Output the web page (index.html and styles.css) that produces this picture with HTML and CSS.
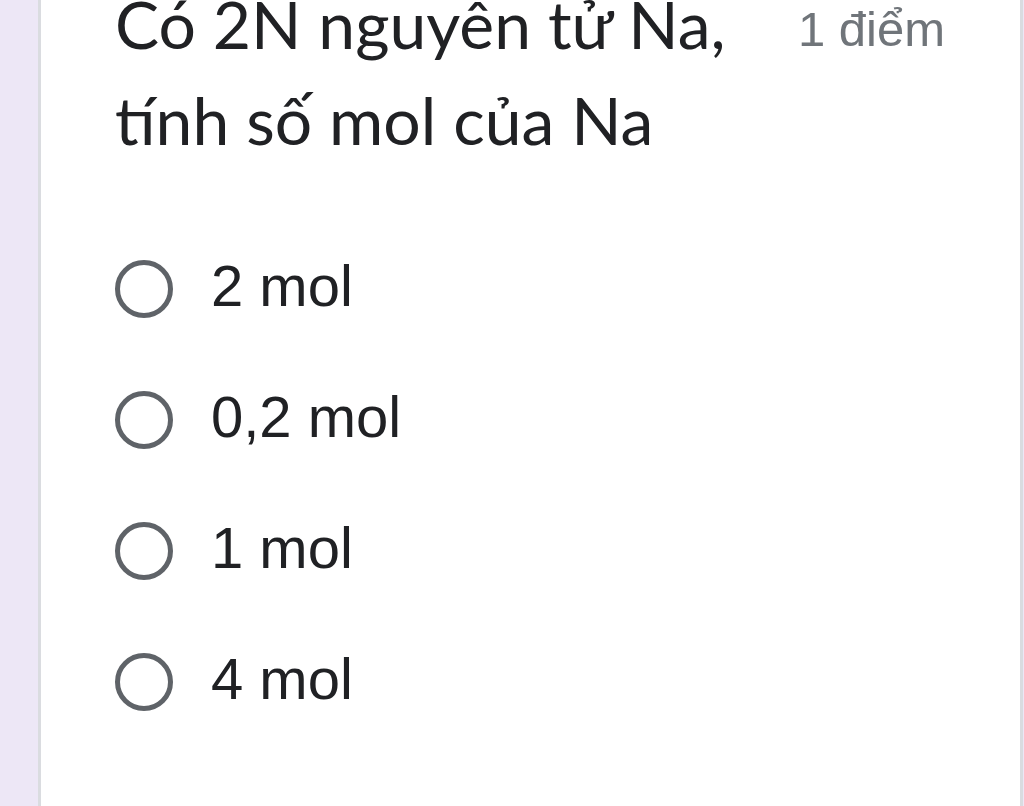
FILE: index.html
```html
<!DOCTYPE html>
<html lang="vi">
<head>
<meta charset="utf-8">
<title>Câu hỏi</title>
<link rel="stylesheet" href="styles.css">
</head>
<body>
<div class="page">
  <div class="side"></div>
  <div class="card">
    <div class="header">
      <div class="title">Có 2N nguyên tử Na, tính số mol của Na</div>
      <div class="points">1 điểm</div>
    </div>
    <div class="options">
      <div class="option"><span class="radio"></span><span class="label">2 mol</span></div>
      <div class="option"><span class="radio"></span><span class="label">0,2 mol</span></div>
      <div class="option"><span class="radio"></span><span class="label">1 mol</span></div>
      <div class="option"><span class="radio"></span><span class="label">4 mol</span></div>
    </div>
  </div>
</div>
</body>
</html>
```

FILE: styles.css
```css
html, body {
  margin: 0;
  padding: 0;
  height: 100%;
  overflow: hidden;
}
.page {
  display: flex;
  height: 806px;
  background: #ede7f6;
}
.side {
  width: 38px;
  flex: none;
}
.card {
  flex: 1;
  background: #ffffff;
  border-left: 3px solid #dadce0;
  border-right: 3px solid #dadce0;
  margin-right: 1px;
  padding: 0 75px 0 74px;
  overflow: hidden;
}
.header {
  display: flex;
  align-items: flex-start;
  margin-top: -24px;
}
.title {
  flex: 1;
  font-family: Lato, "Open Sans", sans-serif;
  font-size: 66px;
  line-height: 96px;
  color: #202124;
  padding-right: 40px;
}
.points {
  flex: none;
  font-family: "Liberation Sans", Arial, sans-serif;
  font-size: 49px;
  line-height: 96px;
  color: #70757a;
  margin-top: 5px;
}
.options {
  margin-top: 55px;
  display: flex;
  flex-direction: column;
}
.option {
  height: 131px;
  display: flex;
  align-items: center;
  gap: 38px;
}
.radio {
  width: 48px;
  height: 48px;
  border: 5px solid #5f6368;
  border-radius: 50%;
  flex: none;
}
.label {
  font-family: "Liberation Sans", Arial, sans-serif;
  font-size: 58px;
  color: #202124;
  padding-bottom: 6px;
}
```
